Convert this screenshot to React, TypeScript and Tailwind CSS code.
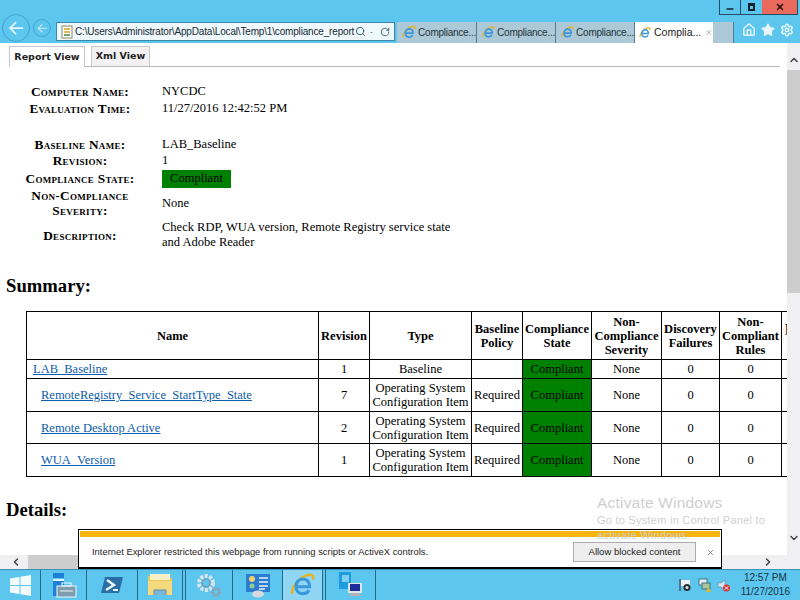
import React from 'react';
import { Home, Star, Settings, Search, RotateCw, ChevronUp, ChevronDown, ChevronLeft, ChevronRight, X, Minus } from 'lucide-react';

const rows = [
  { name: 'RemoteRegistry_Service_StartType_State', revision: '7', h: 'h-[33px]' },
  { name: 'Remote Desktop Active', revision: '2', h: 'h-[32px]' },
  { name: 'WUA_Version', revision: '1', h: 'h-[33px]' },
];

function IeLogo({ size = 16 }: { size?: number }) {
  return (
    <svg width={size} height={size} viewBox="0 0 16 16" fill="none">
      <path d="M1.500 13.500C.5 9 6 2.500 12 1.200c2.500-.5 3.300 1 2.600 3" stroke="#e6b422" strokeWidth="1.600" />
      <path d="M3.800 8.800h8.700c.3-3-1.700-5-4.300-5S3.800 5.900 3.800 8.800c0 2.700 2 4.400 4.400 4.400 1.800 0 3.200-.8 3.900-2.200" stroke="#3a97dc" strokeWidth="2" />
    </svg>
  );
}

function PageIcon() {
  return (
    <svg width="12" height="14" viewBox="0 0 12 14" fill="none">
      <rect x="1" y="1" width="10" height="12" fill="#fff" stroke="#8a8a6a" />
      <path d="M3 4h6M3 7h6" stroke="#d9a520" strokeWidth="1.500" />
      <path d="M3 10h6" stroke="#3d8a3d" strokeWidth="1.500" />
    </svg>
  );
}

function NavArrow({ size, stroke }: { size: number; stroke: string }) {
  return (
    <div
      className="flex items-center justify-center rounded-full border border-[#3fa3cf]"
      style={{ width: size, height: size }}
    >
      <svg width={size * 0.58} height={size * 0.58} viewBox="0 0 16 16" fill="none" stroke={stroke} strokeWidth="1.700">
        <path d="M15 8H2M8 2 2 8l6 6" />
      </svg>
    </div>
  );
}

function InfoRow({ label, children, h }: { label: React.ReactNode; children: React.ReactNode; h: string }) {
  return (
    <tr className={h}>
      <td className="w-[120px] whitespace-nowrap p-0 text-center align-middle text-[13.300px] font-bold leading-[15px] tracking-[0.3px] [font-variant:small-caps]">{label}</td>
      <td className="w-[22px] p-0" />
      <td className="p-0 align-middle leading-[15px]">{children}</td>
    </tr>
  );
}

function Divider({ double }: { double?: boolean }) {
  return (
    <div className="flex h-full shrink-0 gap-[2px]">
      <div className="h-full w-px bg-[#24698a]" />
      {double && <div className="h-full w-px bg-[#24698a]" />}
    </div>
  );
}

function ServerManagerIcon() {
  return (
    <svg width="26" height="26" viewBox="0 0 26 26" fill="none">
      <rect x="2" y="1" width="11" height="5" fill="#1d7fd6" />
      <rect x="2" y="7" width="11" height="17" fill="#1d7fd6" />
      <rect x="2" y="7" width="11" height="2" fill="#dff3fb" />
      <rect x="6" y="14" width="19" height="11" fill="#7d9cae" stroke="#eef8fc" />
      <rect x="11" y="11" width="9" height="3" stroke="#eef8fc" />
      <path d="M9 19h13" stroke="#eef8fc" />
    </svg>
  );
}

function PowerShellIcon() {
  return (
    <svg width="24" height="20" viewBox="0 0 24 20">
      <path d="M5 2h18l-4 16H1z" fill="#2a6ea8" />
      <path d="M7 5l7 5-8 5" fill="none" stroke="#eaf6fc" strokeWidth="2.500" />
      <path d="M13 15h5" stroke="#eaf6fc" strokeWidth="2" />
    </svg>
  );
}

function FolderIcon() {
  return (
    <svg width="26" height="24" viewBox="0 0 26 24">
      <path d="M1 3h9l2 2h13v17H1z" fill="#e9c75b" />
      <rect x="3" y="1" width="20" height="6" fill="#f7efc6" />
      <path d="M1 8h24v14H1z" fill="#f4da7d" />
      <path d="M7 22v-5h12v5" fill="#7fb4d6" stroke="#5f8fb0" />
    </svg>
  );
}

function GearsIcon() {
  return (
    <svg width="28" height="26" viewBox="0 0 28 26" fill="none">
      <circle cx="11" cy="11" r="7" stroke="#d9e6ec" strokeWidth="4" strokeDasharray="3 1.500" />
      <circle cx="11" cy="11" r="4" stroke="#7d93a3" strokeWidth="1.200" />
      <circle cx="21" cy="20" r="3.500" stroke="#8ea2ae" strokeWidth="3" strokeDasharray="2 1" />
    </svg>
  );
}

function ControlPanelIcon() {
  return (
    <svg width="26" height="26" viewBox="0 0 26 26">
      <rect x="1" y="2" width="24" height="18" fill="#2c7cd2" />
      <circle cx="7" cy="7" r="3" fill="#f0d46a" />
      <circle cx="7" cy="14" r="2.500" fill="#8fd18a" />
      <path d="M14 6h9M14 10h9M14 14h9M14 17h6" stroke="#e6f2fb" strokeWidth="1.400" />
      <ellipse cx="13" cy="22" rx="6" ry="3.500" fill="#d6dadd" />
    </svg>
  );
}

function DesktopsIcon() {
  return (
    <svg width="26" height="28" viewBox="0 0 26 28">
      <rect x="1" y="1" width="12" height="17" fill="#1f9be0" />
      <rect x="4" y="4" width="7" height="7" fill="#7fd0f2" />
      <rect x="10" y="12" width="14" height="10" fill="#dfe6ea" />
      <rect x="12" y="13" width="10" height="7" fill="#1d2c9a" />
      <path d="M10 25l4-3h6l4 3z" fill="#b9aeb0" />
    </svg>
  );
}

function TrayFlag() {
  return (
    <svg width="13" height="14" viewBox="0 0 13 14">
      <path d="M1 1v12" stroke="#4a5a64" strokeWidth="1.500" />
      <path d="M2 2h9v6H2z" fill="#e9f2f6" />
      <circle cx="8" cy="9.500" r="3.500" fill="#2b2f33" />
      <circle cx="8" cy="9.500" r="1.500" fill="#dfe8ec" />
    </svg>
  );
}

function TrayNetwork() {
  return (
    <svg width="13" height="14" viewBox="0 0 13 14">
      <rect x="1" y="1" width="8" height="6" fill="#e8f2f6" stroke="#47707f" />
      <rect x="4" y="5" width="8" height="6" fill="#a9c8a0" stroke="#47707f" />
      <path d="M8 14l2.500-5L13 14z" fill="#e6b820" />
    </svg>
  );
}

function TraySound() {
  return (
    <svg width="13" height="14" viewBox="0 0 13 14">
      <path d="M1 5h3l4-3v10l-4-3H1z" fill="#d4e6ee" stroke="#5e8598" strokeWidth=".6" />
      <circle cx="9.500" cy="10" r="3.500" fill="#d83a3a" />
      <path d="M8 8.500l3 3m0-3l-3 3" stroke="#fff" />
    </svg>
  );
}

export default function App() {
  return (
    <div className="relative flex h-[600px] w-[800px] flex-col overflow-hidden bg-white font-['Liberation_Serif',serif] text-black">
      {/* IE chrome */}
      <header className="relative h-[43px] shrink-0 bg-[#5dc6ef] font-['Liberation_Sans',sans-serif]">
        <div className="absolute right-[2px] top-0 flex h-[15px] border-x border-b border-[#1f4e66]">
          <div className="flex w-[21px] items-center justify-center border-r border-[#1f4e66]">
            <Minus size={10} strokeWidth={3.500} className="mt-[3px] text-[#10222e]" />
          </div>
          <div className="flex w-[21px] items-center justify-center">
            <div className="h-[8px] w-[7px] border-2 border-t-[3px] border-[#10222e]" />
          </div>
          <div className="flex w-[35px] items-center justify-center bg-[#ea6a5e]">
            <X size={10} strokeWidth={4} className="text-[#301010]" />
          </div>
        </div>

        <div className="flex h-full items-end pl-[2px]">
          <div className="mb-[1px] flex items-center gap-[3px]">
            <NavArrow size={28} stroke="#e3f5fc" />
            <NavArrow size={18} stroke="#cdeaf6" />
          </div>
          <div className="mb-[2px] ml-[5px] flex h-[19px] w-[339px] items-center border border-[#3d86a8] bg-[#eef8fd] pl-[4px]">
            <PageIcon />
            <span className="ml-[2px] w-[279px] whitespace-nowrap text-[10px] tracking-[-0.17px] text-[#1b2a33]">
              C:\Users\Administrator\AppData\Local\Temp\1\compliance_report
            </span>
            <Search size={11} className="ml-[1px] shrink-0 text-[#33566a]" />
            <span className="ml-[4px] text-[8px] text-[#33566a]">-</span>
            <RotateCw size={10} className="ml-[7px] shrink-0 text-[#33566a]" />
          </div>

          <div className="ml-[2px] flex h-[21px]">
            {[0, 1, 2].map((i) => (
              <div
                key={i}
                className="-mr-px flex w-[80px] items-center gap-[2px] border-x border-[#4c7f97] bg-[#adc8d6] pl-[5px] text-[10px] text-[#23333c] first:border-l-0"
              >
                <IeLogo size={15} />
                <span className="whitespace-nowrap tracking-[-0.25px]">Compliance...</span>
              </div>
            ))}
            <div className="ml-[1px] flex w-[78px] items-center bg-white pl-[4px] text-[10.500px] text-[#222]">
              <IeLogo size={14} />
              <span className="ml-[3px] whitespace-nowrap">Complia...</span>
              <X size={9} strokeWidth={3} className="ml-[4px] text-[#9aa5ab]" />
            </div>
            <div className="w-[21px] border-r border-[#4c7f97] bg-[#adc8d6]" />
          </div>

          <div className="mb-[6px] ml-[8px] flex items-center gap-[5px] text-[#e8f6fc]">
            <Home size={14} strokeWidth={2.500} />
            <Star size={14} fill="currentColor" />
            <Settings size={14} strokeWidth={2.500} />
          </div>
        </div>
      </header>

      {/* Page area */}
      <div className="relative flex min-h-0 flex-1">
        <div className="flex min-w-0 flex-1 flex-col">
          <main className="min-h-0 flex-1 overflow-hidden text-[12.500px]">
            <div className="flex h-[24px] items-end pl-[9px] pr-[7px] font-['DejaVu_Sans',sans-serif] text-[9.500px] font-bold">
              <div className="flex w-full border-b border-[#b9b9b9]">
                <div className="-mb-px flex h-[21px] w-[76px] items-center justify-center border border-b-0 border-[#c8c8c8] bg-white text-[#222]">
                  Report View
                </div>
                <div className="ml-[6px] flex h-[20px] w-[59px] items-center justify-center border border-b-0 border-[#c8c8c8] bg-[#f3f1f3] text-[#222]">
                  Xml View
                </div>
              </div>
            </div>

            <table className="ml-[20px] mt-[16px] border-collapse">
              <tbody>
                <InfoRow label="Computer Name:" h="h-[17px]">NYCDC</InfoRow>
                <InfoRow label="Evaluation Time:" h="h-[17px]">11/27/2016 12:42:52 PM</InfoRow>
              </tbody>
            </table>

            <table className="ml-[20px] mt-[19px] border-collapse">
              <tbody>
                <InfoRow label="Baseline Name:" h="h-[16px]">LAB_Baseline</InfoRow>
                <InfoRow label="Revision:" h="h-[17px]">1</InfoRow>
                <InfoRow label="Compliance State:" h="h-[19px]">
                  <div className="flex h-[18px] w-[69px] items-center justify-center bg-[#008000]">Compliant</div>
                </InfoRow>
                <InfoRow label={<>Non-Compliance<br />Severity:</>} h="h-[30px]">None</InfoRow>
                <InfoRow label="Description:" h="h-[34px]">
                  Check RDP, WUA version, Remote Registry service state
                  <br />
                  and Adobe Reader
                </InfoRow>
              </tbody>
            </table>

            <h2 className="ml-[6px] mt-[23px] text-[18.670px] font-bold leading-[22px]">Summary:</h2>

            <table className="ml-[26px] mt-[14px] w-[779px] table-fixed border-collapse leading-[14px]">
              <thead>
                <tr className="h-[48px] text-center font-bold">
                  <th className="w-[292px] border border-black p-0">Name</th>
                  <th className="w-[51px] border border-black p-0">Revision</th>
                  <th className="w-[102px] border border-black p-0">Type</th>
                  <th className="w-[51px] border border-black p-0">Baseline<br />Policy</th>
                  <th className="w-[69px] border border-black p-0">Compliance<br />State</th>
                  <th className="w-[70px] border border-black p-0">Non-<br />Compliance<br />Severity</th>
                  <th className="w-[58px] border border-black p-0">Discovery<br />Failures</th>
                  <th className="w-[62px] border border-black p-0">Non-<br />Compliant<br />Rules</th>
                  <th className="w-[24px] overflow-hidden border-y border-l border-black p-0 pl-[2px] text-left font-normal">]<br />&nbsp;</th>
                </tr>
              </thead>
              <tbody className="text-center">
                <tr className="h-[19px]">
                  <td className="border border-black p-0 pl-[6px] text-left">
                    <a href="#" className="text-[#0b5cad] underline">LAB_Baseline</a>
                  </td>
                  <td className="border border-black p-0">1</td>
                  <td className="border border-black p-0">Baseline</td>
                  <td className="border border-black p-0" />
                  <td className="border border-black bg-[#008000] p-0">Compliant</td>
                  <td className="border border-black p-0">None</td>
                  <td className="border border-black p-0">0</td>
                  <td className="border border-black p-0">0</td>
                  <td className="border-y border-l border-black p-0" />
                </tr>
                {rows.map((row) => (
                  <tr key={row.name} className={row.h}>
                    <td className="border border-black p-0 pl-[14px] text-left">
                      <a href="#" className="text-[#0b5cad] underline">{row.name}</a>
                    </td>
                    <td className="border border-black p-0">{row.revision}</td>
                    <td className="border border-black p-0">Operating System<br />Configuration Item</td>
                    <td className="border border-black p-0">Required</td>
                    <td className="border border-black bg-[#008000] p-0">Compliant</td>
                    <td className="border border-black p-0">None</td>
                    <td className="border border-black p-0">0</td>
                    <td className="border border-black p-0">0</td>
                    <td className="border-y border-l border-black p-0" />
                  </tr>
                ))}
              </tbody>
            </table>

            <h2 className="ml-[6px] mt-[22px] text-[18.670px] font-bold leading-[22px]">Details:</h2>
          </main>

          {/* horizontal scrollbar */}
          <div className="flex h-[14px] shrink-0 items-center bg-[#f0eff2] pl-[10px] pr-[13px] text-[#444]">
            <ChevronLeft size={12} strokeWidth={3} />
            <div className="ml-[6px] h-full w-[670px] bg-[#cdcdcd]" />
            <ChevronRight size={12} strokeWidth={3} className="ml-auto" />
          </div>
        </div>

        {/* vertical scrollbar */}
        <div className="flex w-[13px] shrink-0 flex-col items-center bg-[#f0eff2] pb-[25px] pt-[11px] text-[#444]">
          <ChevronUp size={12} strokeWidth={3} />
          <div className="mt-[4px] h-[223px] w-full bg-[#cdcdcd]" />
          <ChevronDown size={12} strokeWidth={3} className="mt-auto" />
        </div>

        {/* Notification bar */}
        <div className="absolute bottom-0 left-[78px] h-[40px] w-[644px] border border-b-2 border-black bg-white font-['Liberation_Sans',sans-serif]">
          <div className="mx-px mt-px h-[6px] bg-[#f6b40e]" />
          <div className="flex h-[30px] items-center pl-[13px]">
            <span className="w-[481px] whitespace-nowrap text-[9.400px] text-[#222]">
              Internet Explorer restricted this webpage from running scripts or ActiveX controls.
            </span>
            <button className="flex h-[20px] w-[123px] items-center justify-center border border-[#adadad] bg-[#eeeeee] text-[9.500px] text-[#222]">
              Allow blocked content
            </button>
            <X size={9} strokeWidth={2.500} className="ml-[10px] text-[#8c8c8c]" />
          </div>
        </div>

        {/* Activate watermark lies over the notification bar */}
        <div className="pointer-events-none absolute left-[597px] top-[450px] font-['Liberation_Sans',sans-serif] text-[#cfcfcf]">
          <div className="text-[15.500px] leading-[20px] tracking-[0.2px]">Activate Windows</div>
          <div className="text-[11px] leading-[15px] tracking-[0.25px]">Go to System in Control Panel to<br />activate Windows.</div>
        </div>
      </div>

      {/* Taskbar */}
      <footer className="flex h-[31px] shrink-0 items-center border-t border-[#3f90b4] bg-[#5dc6ef] font-['Liberation_Sans',sans-serif]">
        <div className="flex h-full w-[40px] items-center justify-center">
          <svg width="21" height="21" viewBox="0 0 21 21" fill="#f4fbfe">
            <path d="M0 3.500 9.500 2v8H0zM10.500 1.800 21 0v10h-10.500zM0 11h9.500v8L0 17.500zM10.500 11H21v10l-10.500-1.800z" />
          </svg>
        </div>
        <Divider />
        <div className="flex h-full w-[45px] items-center justify-center"><ServerManagerIcon /></div>
        <Divider />
        <div className="flex h-full w-[50px] items-center justify-center"><PowerShellIcon /></div>
        <Divider />
        <div className="flex h-full w-[44px] items-center justify-center"><FolderIcon /></div>
        <Divider double />
        <div className="flex h-full w-[46px] items-center justify-center"><GearsIcon /></div>
        <Divider />
        <div className="flex h-full w-[49px] items-center justify-center"><ControlPanelIcon /></div>
        <Divider />
        <div className="flex h-full w-[39px] items-center justify-center bg-[#8ed6f3]"><IeLogo size={25} /></div>
        <Divider double />
        <div className="flex h-full w-[49px] items-center justify-center"><DesktopsIcon /></div>
        <Divider />

        <div className="ml-auto flex items-center gap-[6px] pr-[10px]">
          <TrayFlag />
          <TrayNetwork />
          <TraySound />
          <div className="ml-[5px] text-center text-[10px] leading-[14px] text-[#16323f]">
            12:57 PM
            <br />
            11/27/2016
          </div>
        </div>
      </footer>
    </div>
  );
}
